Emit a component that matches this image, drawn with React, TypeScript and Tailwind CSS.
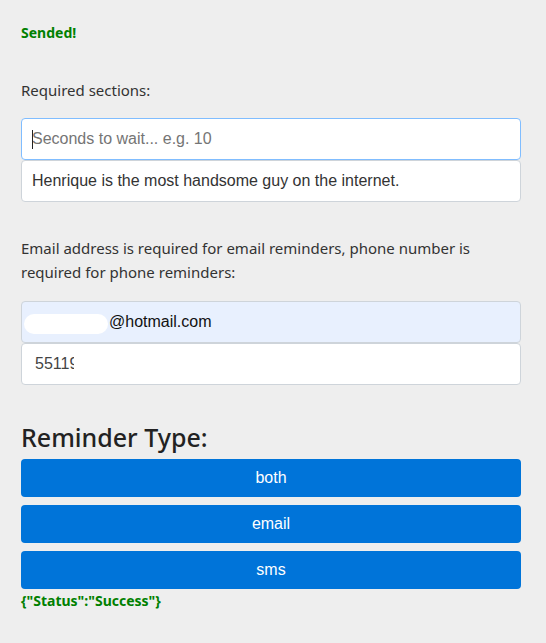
import React from "react";

const label = "font-['Noto_Sans',sans-serif] text-[15px] leading-[24px] text-[#333333]";
const field = "h-[42px] w-full rounded-[4px] border px-[10px] flex items-center font-['Liberation_Sans',Arial,sans-serif] text-[16px]";

export default function App() {
  return (
    <div className="min-h-[643px] w-full bg-[#eeeeee] px-[21px] pt-[23px]">
      <div className="w-[500px]">
        <div className="font-['Noto_Sans',sans-serif] text-[14px] font-bold leading-[20px] text-[#008000]">Sended!</div>
        <div className={`${label} mt-[35px]`}>Required sections:</div>
        <div className="mt-[16px] flex flex-col">
          <div className={`${field} relative border-[#80bdff] bg-white text-[#757575]`}>
            <span className="absolute left-[10px] top-[11px] h-[19px] w-px bg-[#222]" />
            Seconds to wait... e.g. 10
          </div>
          <div className={`${field} border-[#ced4da] bg-white text-[#333333]`}>
            Henrique is the most handsome guy on the internet.
          </div>
        </div>
        <div className={`${label} mt-[34px]`}>
          Email address is required for email reminders, phone number is required for phone reminders:
        </div>
        <div className="mt-[17px] flex flex-col">
          <div className={`${field} relative border-[#ced4da] bg-[#e8f0fe] text-[#111111]`}>
            <span className="relative z-10 pl-[77px]">@hotmail.com</span>
            <span className="absolute left-[2px] top-[12px] z-20 h-[20px] w-[84px] rounded-full bg-white" />
          </div>
          <div className={`${field} border-[#ced4da] bg-white pl-[13px] text-[#444444]`}>
            <span>5511</span>
            <span className="inline-block w-[5px] overflow-hidden">9</span>
          </div>
        </div>
        <div className="mt-[36px] font-['Noto_Sans',sans-serif] text-[25px] font-medium leading-[32px] text-[#222222]">Reminder Type:</div>
        <div className="mt-[6px] flex flex-col gap-[8px]">
          {["both", "email", "sms"].map((t) => (
            <button key={t} className="h-[38px] w-full rounded-[4px] bg-[#0074d9] font-['Liberation_Sans',Arial,sans-serif] text-[16px] text-white">
              {t}
            </button>
          ))}
        </div>
        <div className="mt-[2px] font-['Noto_Sans',sans-serif] text-[14px] font-bold leading-[20px] text-[#008000]">{'{"Status":"Success"}'}</div>
      </div>
    </div>
  );
}
